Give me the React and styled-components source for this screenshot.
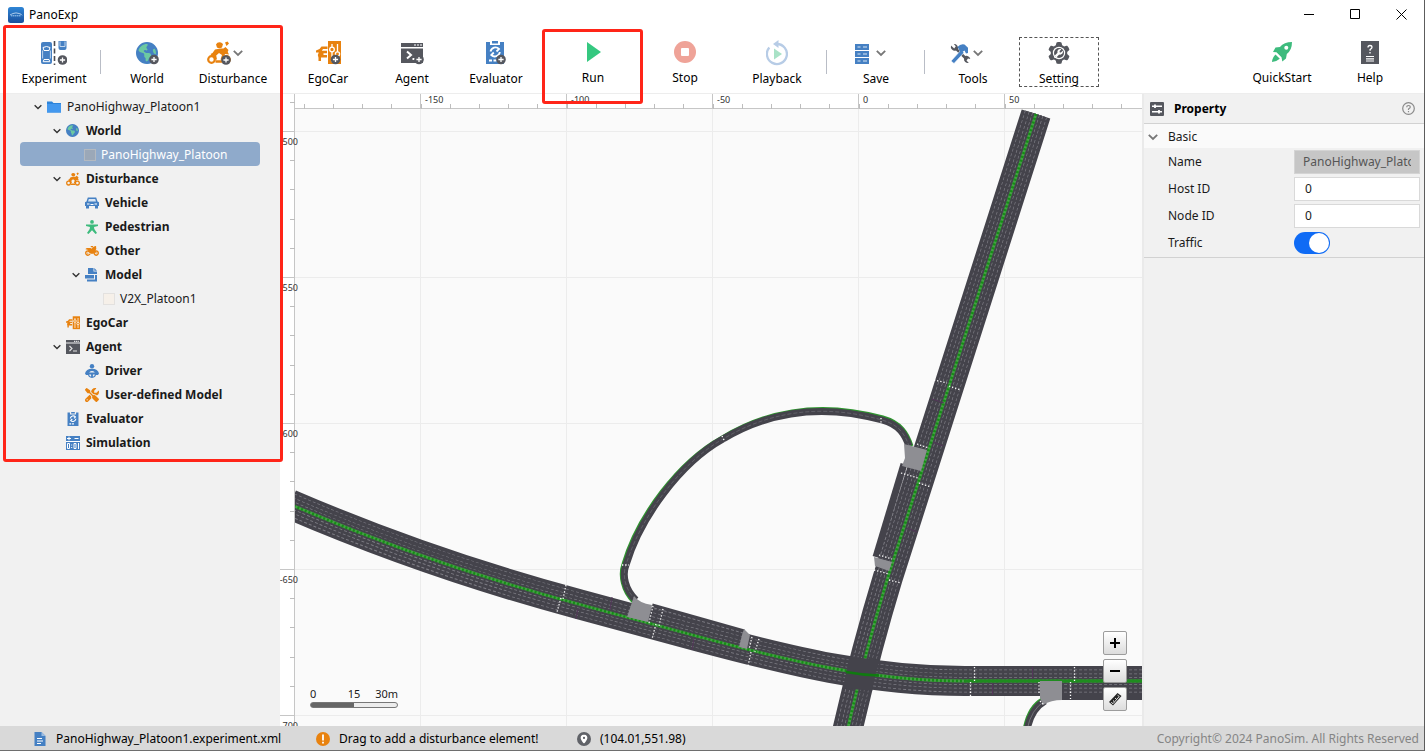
import React, { useState } from 'react';
import styled, { createGlobalStyle, css } from 'styled-components';
import {
  FaEarthAmericas,
  FaMotorcycle,
  FaScrewdriverWrench,
  FaGear,
  FaWrench,
  FaLocationDot,
} from 'react-icons/fa6';

const BLUE = '#4580c3';
const ORANGE = '#e8820f';
const GREEN = '#3dbb7d';
const SLATE = '#55575e';
const RED = '#ff2518';
const ROAD = '#44434b';
const LANE = '#7d7c84';
const PATCH = '#8e8e93';

const GlobalStyle = createGlobalStyle`
  *, *::before, *::after { box-sizing: border-box; }
  body { margin: 0; }
  body, button, input {
    font-family: "Noto Sans", "Open Sans", "Noto Sans CJK SC", sans-serif;
    font-size: 12px;
    line-height: 16px;
    color: #1a1a1a;
  }
`;

const Shell = styled.div`
  position: relative;
  display: flex;
  flex-direction: column;
  height: 100vh;
  background: #fff;
  border-right: 1px solid #5c5c5c;
  border-bottom: 1px solid #6e6e6e;
  overflow: hidden;
`;

/* ---------- title bar ---------- */

const TitleBar = styled.header`
  display: flex;
  align-items: center;
  flex: none;
  height: 28px;
  padding-top: 1px;
  padding-left: 8px;
  gap: 5px;
  color: #000;
`;

const WindowControls = styled.div`
  display: flex;
  margin-left: auto;
`;

const WindowButton = styled.button`
  display: grid;
  place-items: center;
  width: 46px;
  height: 27px;
  padding: 0;
  border: 0;
  background: none;
`;

/* ---------- toolbar ---------- */

const Toolbar = styled.nav`
  display: flex;
  align-items: center;
  flex: none;
  height: 66px;
  padding: 2px 14px 0;
  border-bottom: 1px solid #ededed;
`;

const ToolGroup = styled.div`
  display: flex;
  gap: ${(p) => p.$gap || 0}px;
  margin-left: ${(p) => (p.$end ? 'auto' : 0)};
`;

const Divider = styled.span`
  width: 1px;
  height: 24px;
  margin: 0 ${(p) => p.$space}px;
  background: #b9bdc6;
`;

const ToolButton = styled.button`
  display: flex;
  flex-direction: column;
  align-items: center;
  gap: 6px;
  width: 80px;
  height: 50px;
  padding: 3px 0 0;
  border: 1px dashed ${(p) => (p.$focused ? '#555' : 'transparent')};
  background: none;
  color: #000;
`;

const ToolIcon = styled.span`
  display: flex;
  align-items: center;
  gap: 2px;
  height: 24px;
  padding-right: ${(p) => (p.$menu ? 16 : 0)}px;
`;

/* ---------- body ---------- */

const Body = styled.main`
  display: flex;
  flex: 1;
  min-height: 0;
`;

const Sidebar = styled.aside`
  flex: none;
  width: 280px;
  padding: 0 20px;
  background: #f1f1f1;
`;

const Tree = styled.ul`
  margin: 0;
  padding: 0;
  list-style: none;
`;

const TreeRow = styled.li`
  display: flex;
  align-items: center;
  height: 24px;
  padding-top: 1px;
  padding-left: ${(p) => 12 + p.$level * 19}px;
  border-radius: 4px;
  font-weight: ${(p) => (p.$bold ? 700 : 400)};
  white-space: nowrap;
  ${(p) =>
    p.$selected &&
    css`
      background: #8faacb;
      color: #fff;
    `}
`;

const Toggle = styled.button`
  display: grid;
  place-items: center;
  width: 12px;
  height: 16px;
  margin-right: 3px;
  padding: 0;
  border: 0;
  background: none;
`;

const ToggleGap = styled.span`
  width: 15px;
`;

const TreeIcon = styled.span`
  display: flex;
  width: 14px;
  margin-right: 6px;
`;

const Swatch = styled.span`
  width: 12px;
  height: 12px;
  margin: 0 5px 0 -1px;
  border: 1px solid ${(p) => (p.$selected ? '#b3b9c0' : '#e3e1df')};
  background: ${(p) => (p.$selected ? '#9ba8b8' : '#f6f0e9')};
`;

const MapArea = styled.section`
  position: relative;
  flex: 1;
  min-width: 0;
  overflow: hidden;
`;

const MapCanvas = styled.svg`
  display: block;
  width: 100%;
  height: 100%;
`;

const RulerText = styled.text`
  font-size: 9px;
  fill: #333;
`;

const MapControls = styled.div`
  position: absolute;
  right: 15px;
  bottom: 15px;
  display: flex;
  flex-direction: column;
  gap: 4px;
`;

const MapButton = styled.button`
  display: grid;
  place-items: center;
  width: 24px;
  height: 24px;
  padding: 0;
  border: 1px solid #9c9c9c;
  border-radius: 2px;
  background: linear-gradient(#fff, #dcdcdc);
`;

const Scale = styled.div`
  position: absolute;
  left: 30px;
  bottom: 18px;
  width: 88px;
`;

const ScaleLabels = styled.div`
  display: grid;
  grid-template-columns: 1fr 1fr 1fr;
  font-size: 11px;

  span:nth-child(2) { text-align: center; }
  span:nth-child(3) { text-align: right; }
`;

const ScaleBar = styled.div`
  height: 6px;
  border: 1px solid #777;
  border-radius: 3px;
  background: linear-gradient(90deg, #666 50%, #ececec 50%);
`;

/* ---------- property panel ---------- */

const Panel = styled.aside`
  flex: none;
  width: 282px;
  border-left: 2px solid #eaeaea;
  background: #f1f1f1;
`;

const PanelHeader = styled.div`
  display: flex;
  align-items: center;
  height: 30px;
  padding: 0 9px 0 6px;
  border-bottom: 1px solid #d2d2d2;
`;

const PanelTitle = styled.h2`
  flex: 1;
  margin: 0 0 0 10px;
  font-size: 12px;
  line-height: 16px;
  color: #000;
`;

const IconButton = styled.button`
  display: flex;
  padding: 0;
  border: 0;
  background: none;
`;

const SectionHeader = styled.button`
  display: flex;
  align-items: center;
  gap: 10px;
  width: 100%;
  height: 24px;
  padding: 1px 4px 0;
  border: 0;
  background: #fafafa;
`;

const Fields = styled.div`
  padding: 0 4px 1px 24px;
  border-bottom: 1px solid #d2d2d2;
`;

const Field = styled.div`
  display: flex;
  align-items: center;
  justify-content: space-between;
  height: 27px;
`;

const FieldValue = styled.div`
  display: flex;
  width: 126px;
`;

const TextInput = styled.input`
  width: 100%;
  height: 24px;
  padding: 0 8px 0 10px;
  border: 1px solid #d9d9d9;
  background: #fff;

  &:disabled {
    padding-left: 8px;
    border-color: #d4d4d4;
    background: #c6c6c6;
    color: #555;
    -webkit-text-fill-color: #555;
  }
`;

const Switch = styled.input`
  appearance: none;
  width: 36px;
  height: 22px;
  margin: 0;
  padding: 1px;
  border-radius: 11px;
  background: #c4c4c4;

  &::before {
    content: '';
    display: block;
    width: 20px;
    height: 20px;
    border-radius: 50%;
    background: #fff;
  }

  &:checked {
    background: #0f6bf5;
  }

  &:checked::before {
    margin-left: 14px;
  }
`;

/* ---------- status bar ---------- */

const StatusBar = styled.footer`
  display: flex;
  align-items: center;
  flex: none;
  height: 24px;
  padding: 1px 5px 0 33px;
  background: #d9d9d9;
`;

const StatusItem = styled.span`
  display: flex;
  align-items: center;
  gap: 9px;
  min-width: ${(p) => p.$width}px;
  color: #000;
  white-space: nowrap;
`;

const Copyright = styled.span`
  margin-left: auto;
  color: #858585;
  white-space: nowrap;
`;

/* ---------- highlight frames ---------- */

const Highlight = styled.div`
  position: absolute;
  left: ${(p) => p.$x}px;
  top: ${(p) => p.$y}px;
  width: ${(p) => p.$w}px;
  height: ${(p) => p.$h}px;
  border: 3px solid ${RED};
  border-radius: 3px;
  pointer-events: none;
`;

/* ---------- icons ---------- */

const Svg = ({ w = 24, h = 24, box, children }) => (
  <svg width={w} height={h} viewBox={box || `0 0 ${w} ${h}`} fill="none" aria-hidden="true">
    {children}
  </svg>
);

const PlusBadge = ({ x, y }) => (
  <g>
    <circle cx={x} cy={y} r="4.8" fill={SLATE} />
    <path d={`M${x - 2.6} ${y}h5.2M${x} ${y - 2.6}v5.2`} stroke="#fff" strokeWidth="1.3" />
  </g>
);

const Chevron = ({ w = 10, color = '#777', stroke = 1.8 }) => (
  <svg width={w} height={w} viewBox="0 0 10 10" fill="none" aria-hidden="true">
    <path d="M.8 2.8 5 7l4.2-4.2" stroke={color} strokeWidth={stroke} />
  </svg>
);

const LogoIcon = () => (
  <Svg w={16} h={16}>
    <defs>
      <linearGradient id="logo" x1="0" y1="0" x2="0" y2="1">
        <stop offset="0" stopColor="#2f86d6" />
        <stop offset="1" stopColor="#1a4f9c" />
      </linearGradient>
    </defs>
    <rect width="16" height="16" rx="2.5" fill="url(#logo)" />
    <path d="M2 8q1.500-.8 3-1.500 3-1.200 6 0 2.500.5 3 1.800" stroke="#cfe3f7" strokeWidth=".8" />
    <path d="M3 8.800h10" stroke="#a9cdf0" strokeWidth="1" strokeDasharray="1.500 .5" />
  </Svg>
);

const ExperimentIcon = () => (
  <Svg w={26} h={24}>
    <rect x="0" y="1" width="11" height="22" rx="2" fill={BLUE} />
    <path d="M2 6.500q3.500-2 7 0l-1 3H3zM3 18.500h5l.8 2.200H2.200z" stroke="#fff" strokeWidth="1" />
    <path d="M1.600 9.500v8M9.400 9.500v8" stroke="#dbe7f5" strokeWidth=".8" />
    <path d="M13.500 0v24" stroke="#4b4b4f" strokeWidth="1.600" strokeDasharray="5 2.500" />
    <path d="M17.500 0h8v7q0 2-2 2h-4q-2 0-2-2z" fill={BLUE} />
    <path d="M19 .5v5h5v-5" stroke="#c3d6ec" strokeWidth="1" />
    <PlusBadge x={21.500} y={19} />
  </Svg>
);

const Globe = ({ size }) => (
  <>
    <circle cx={size / 2} cy={size / 2} r={size / 2 - 0.6} fill="#6cc9a1" />
    <FaEarthAmericas size={size} color={BLUE} />
  </>
);

const WorldIcon = () => (
  <Svg w={24} h={24}>
    <g transform="translate(1 1)"><Globe size={22} /></g>
    <PlusBadge x={19} y={18.500} />
  </Svg>
);

const RiderShape = () => (
  <>
    <circle cx="4.500" cy="18.500" r="3.300" stroke={ORANGE} strokeWidth="2.200" />
    <circle cx="19.500" cy="18.500" r="3.300" stroke={ORANGE} strokeWidth="2.200" />
    <path d="M9 3.500q1.500-3 5-2l2 1.500-1 3.500q-3 1.500-5 0z" fill={ORANGE} />
    <path d="M18 1.500l2.500-1 1.500 2-2.500 2.500zM16.500 7.500l2-1.500 3 3-1.500 3z" fill={ORANGE} />
    <path d="M13.500 7.500 8 8.500 5.500 12l-2 1 2 2.500L8 18.500h2l-.8-4L12 12l3 2-1.500 4.500 2.500 1 2-6.500 4 .5-2-4-2.500-2z" fill={ORANGE} />
    <path d="M8.500 20.500h7" stroke={ORANGE} strokeWidth="2.500" />
  </>
);

const DisturbanceIcon = () => (
  <Svg w={24} h={24}>
    <RiderShape />
    <PlusBadge x={19} y={19} />
  </Svg>
);

const EgoShape = () => (
  <>
    <path d="M0 9.500 3.500 8l2-2.500h6V8H7L5.800 9.800H11v2.400H7.500V14H11v2.500H5V20H2.500v-3.200L1.800 14l1-2.500H0z" fill={ORANGE} />
    <rect x="12" y="0" width="13" height="23" fill={ORANGE} />
    <path d="M16 3v18M21.500 3v18" stroke="#fff" strokeWidth="1.300" />
    <circle cx="16" cy="8.500" r="2.300" fill={ORANGE} stroke="#fff" strokeWidth="1.300" />
    <circle cx="21.500" cy="13" r="2.100" fill={ORANGE} stroke="#fff" strokeWidth="1.300" />
  </>
);

const EgoCarIcon = () => (
  <Svg w={25} h={24}>
    <EgoShape />
    <PlusBadge x={19.500} y={18.500} />
  </Svg>
);

const AgentShape = () => (
  <>
    <path d="M0 1h22v4H0zM0 6.500h22V21H0z" fill={SLATE} />
    <path d="M13 3h2M16 3h2M19 3h2" stroke="#fff" strokeWidth="1.200" />
    <path d="m6 9.500 4 3.500-4 3.500M11.500 17h3" stroke="#fff" strokeWidth="2" />
  </>
);

const AgentIcon = () => (
  <Svg w={23} h={24}>
    <g transform="translate(0 1)"><AgentShape /></g>
    <PlusBadge x={18} y={18.500} />
  </Svg>
);

const EvaluatorShape = () => (
  <>
    <path d="M0 1h4v3h10V1h4v22H0zM6 0h6v2.500H6z" fill={BLUE} />
    <path d="M4.500 10.500a5 5 0 0 1 8.500-2.500l-2.500 2.500M13.800 11a5 5 0 0 1-8.500 3l2.500-2.500" stroke="#fff" strokeWidth="1.800" />
    <path d="M3 19.500h3M7.500 19.500h3" stroke="#fff" strokeWidth="2" />
  </>
);

const EvaluatorIcon = () => (
  <Svg w={20} h={24}>
    <EvaluatorShape />
    <PlusBadge x={15} y={18.500} />
  </Svg>
);

const RunIcon = () => (
  <Svg w={15} h={20}><path d="M1 0l14 10L1 20z" fill="#35c880" /></Svg>
);

const StopIcon = () => (
  <Svg w={22} h={22}>
    <circle cx="11" cy="11" r="11" fill="#efa398" />
    <rect x="7" y="7" width="8" height="8" rx="1" fill="#fff" />
  </Svg>
);

const PlaybackIcon = () => (
  <Svg w={22} h={26}>
    <path d="M3.300 7.500A10 10 0 1 0 11 4" stroke="#b7cce6" strokeWidth="2.300" />
    <path d="M12.500 0v8L7 4z" fill="#b7cce6" />
    <path d="M8 8.500l8 5.500-8 5.500z" fill="#a9e2c6" />
  </Svg>
);

const SaveIcon = () => (
  <Svg w={24} h={24}>
    {[4, 11, 18].map((y) => (
      <g key={y}>
        <rect x="5" y={y - 1} width="14" height="6" fill={BLUE} />
        <path d={`M7.500 ${y + 2}h3M13 ${y + 2}h4`} stroke="#d9e6f4" strokeWidth="1.200" />
      </g>
    ))}
  </Svg>
);

const ToolsIcon = () => (
  <Svg w={24} h={24}>
    <path d="M4 4.500a4 4 0 0 0 5 5l8 8a4 4 0 0 0 4.800 4.500l-2.300-2.500 1.500-2 2.300.5a4 4 0 0 0-5-3l-7.300-7A4 4 0 0 0 6.800 3l2 2.200-1.600 2.200z" fill={SLATE} />
    <path d="m4 20 10-11 3 2.700L7 22.500z" fill={BLUE} stroke="#fff" strokeWidth=".6" />
    <path d="M10.500 6q3-3.500 7-2.500l3.500 3.200V12l-2 .5-1.500-3L14 12z" fill={BLUE} />
  </Svg>
);

const SettingIcon = () => (
  <Svg w={24} h={24}>
    <FaGear x={1} y={1} size={22} color={SLATE} />
    <circle cx="12" cy="12" r="6.200" fill="#fff" />
    <circle cx="12" cy="12" r="5" fill={SLATE} />
    <FaWrench x={7} y={8} size={9} color="#fff" />
  </Svg>
);

const RocketIcon = () => (
  <Svg w={22} h={22}>
    <path d="M21 1Q13 1 9 6L4.500 6.500 2 11l3.500.3 5 5 .8 4.200 3.700-3 .8-4.500Q21 9 21 1z" fill={GREEN} />
    <circle cx="15.300" cy="6.700" r="2" fill="#fff" />
    <path d="M4.500 13.500l4.300 4.300Q6 20.500 1 21q.5-5 3.500-7.500z" fill={GREEN} />
  </Svg>
);

const HelpIcon = () => (
  <Svg w={18} h={23}>
    <rect width="18" height="23" fill={SLATE} />
    <path d="M7 6.500q0-2 2-2t2 1.800q0 1.200-1.900 2.200v1.300M9 11v1.500" stroke="#fff" strokeWidth="1.300" />
    <path d="M5 15.500h8M5 17.800h8M5 20h8" stroke="#fff" strokeWidth="1.200" />
  </Svg>
);

const FolderIcon = () => (
  <Svg w={14} h={14}>
    <path d="M0 1.500h5L6.500 3H14v9.500H0z" fill="#2d84da" />
    <path d="M0 4h14v8.500H0z" fill="#4398ee" />
  </Svg>
);

const GlobeIcon = () => <Svg w={14} h={14}><Globe size={13} /></Svg>;
const BikerIcon = () => <Svg w={14} h={14} box="0 0 24 23"><RiderShape /></Svg>;
const MotorbikeIcon = () => (
  <Svg w={14} h={14}>
    <FaMotorcycle size={14} color={ORANGE} />
    <path d="M1.500 4h4l1.500 1 3-1.500 1.500 1L9 9.500H5L3 6.500z" fill={ORANGE} />
  </Svg>
);
const CraftIcon = () => <FaScrewdriverWrench size={14} color={ORANGE} aria-hidden="true" />;

const VehicleIcon = () => (
  <Svg w={14} h={14}>
    <path d="M2.800 1.500h8.400L12.500 5.500l1.500.8V10h-1v2.500h-3V10H4v2.500H1V10H0V6.300l1.500-.8z" fill={BLUE} />
    <path d="M3.800 3h6.400l.8 2.500H3z" fill="#d8e5f4" />
    <path d="M2 8h2.500M9.500 8H12M5.500 8.500h3" stroke="#fff" strokeWidth="1.100" />
  </Svg>
);

const PedestrianIcon = () => (
  <Svg w={14} h={14}>
    <circle cx="7" cy="1.900" r="1.900" fill={GREEN} />
    <path d="M1 4.500h12v1.600l-4 .8.300 2L12 13l-1.500 1L7 10.300 3.500 14 2 13l2.700-4.100.3-2-4-.8z" fill={GREEN} />
  </Svg>
);

const ModelIcon = () => (
  <Svg w={14} h={14}>
    <path d="M3 0h5.500v3.500H12V6H3z" fill={BLUE} />
    <path d="M9.300 0 12 2.700H9.300zM0 7h9v3.500H0zM10 7h2v6.500H2v-2h8z" fill={BLUE} />
  </Svg>
);

const SmallEgoIcon = () => <Svg w={14} h={14} box="0 0 25 24"><EgoShape /></Svg>;
const SmallAgentIcon = () => (
  <Svg w={14} h={14}>
    <path d="M0 0h14v2.500H0zM0 3.500h14V14H0z" fill={SLATE} />
    <path d="M8 1.300h5" stroke="#fff" strokeWidth="1" strokeDasharray="1.200 .6" />
    <path d="m3.500 6 2.500 2.500L3.500 11M7 11h4" stroke="#e4e4e4" strokeWidth="1.100" />
  </Svg>
);
const SmallEvaluatorIcon = () => <Svg w={14} h={14} box="-2 0 22 23"><EvaluatorShape /></Svg>;

const DriverIcon = () => (
  <Svg w={14} h={14}>
    <circle cx="7" cy="2.200" r="2.200" fill={BLUE} />
    <path d="M0 9.500Q1 4.800 7 4.800t7 4.700l-1 1.500H1z" fill={BLUE} />
    <circle cx="7" cy="9.800" r="3.500" fill="#f1f1f1" stroke={BLUE} strokeWidth="1.200" />
    <path d="M4 9.500h6M7 10v3" stroke={BLUE} strokeWidth="1.800" />
  </Svg>
);

const SimulationIcon = () => (
  <Svg w={14} h={14}>
    <rect width="14" height="14" fill={BLUE} />
    <path d="M1 2.500h4M3 .7v3.600M8.500 2.500h4M0 5.500h14" stroke="#fff" strokeWidth="1" />
    <path d="M1.500 7.500h2v5h-2zM8 7.500h2v5H8zM12.500 7v6M5.700 8.500v1M5.700 11v1" stroke="#fff" strokeWidth="1" />
  </Svg>
);

const PropertyIcon = () => (
  <Svg w={14} h={14}>
    <rect width="14" height="14" rx="1" fill={SLATE} />
    <path d="M2 4.300h10M2 9.700h10" stroke="#fff" strokeWidth="1.400" />
    <path d="M5 2.500v3.600M9 7.900v3.600" stroke="#fff" strokeWidth="1.800" />
  </Svg>
);

const QuestionIcon = () => (
  <Svg w={13} h={13}>
    <circle cx="6.500" cy="6.500" r="5.800" stroke="#8a8a8a" strokeWidth="1.200" />
    <path d="M4.700 5.300q0-1.800 1.800-1.800t1.800 1.600q0 .9-1.800 2v.8M6.500 8.900v1.300" stroke="#8a8a8a" strokeWidth="1.200" />
  </Svg>
);

const FileIcon = () => (
  <Svg w={14} h={14}>
    <path d="M1.500 0h7l4 4v10h-11z" fill={BLUE} />
    <path d="M8.500 0v4h4z" fill="#9dbde2" />
    <path d="M4 6.500h5M4 9h6M4 11.500h4" stroke="#fff" strokeWidth="1.100" />
  </Svg>
);

const WarningIcon = () => (
  <Svg w={14} h={14}>
    <circle cx="7" cy="7" r="7" fill={ORANGE} />
    <path d="M7 2.500v6M7 9.700v1.900" stroke="#fff" strokeWidth="1.800" />
  </Svg>
);

const PinIcon = () => (
  <Svg w={14} h={14}>
    <circle cx="7" cy="7" r="7" fill="#606268" />
    <FaLocationDot x={2.500} y={2.500} size={9} color="#fff" />
  </Svg>
);

const RulerIcon = () => (
  <Svg w={14} h={14}>
    <path d="M1 10 9.500 1 13.500 4 5 13.500z" fill="#222" />
    <path d="m3.200 10.300 1.800 1.400 6.200-7.200L9.500 3.200" stroke="#ddd" strokeWidth="1" />
    <path d="M5 8.500 6.200 9.600M7.200 6.200 8.400 7.200" stroke="#fff" strokeWidth="1" />
  </Svg>
);

/* ---------- map ---------- */

const MAIN_ROAD = 'M290 504.200C380 543 470 575 580 604.500L700 637C790 661 870 681 965 681H1500';
const CROSS_ROAD = 'M1036 114L888 577C870 636 858 684 847 732';
const LOOP = 'M636 600C625 590 622 575 626 565C640 518 680 463 723 439C780 405 835 407 882 420C900 425 905 435 909 446';
const LOOP_EDGE = 'M633 602C622 591 619 575 623 564C637 516 678 461 722 437C780 402 836 404 883 417C901 422 908 433 912 446';
const RAMP = 'M1045 701Q1031 709 1027 730';
const RAMP_EDGE = 'M1042 699Q1028 707 1024 730';

const STOP_LINES = [
  'M934 380l13 3M949 386l12 4',
  'M917 444l12 4',
  'M901 473l17 5M919 483l12 4',
  'M879 555l13 4M874 570l15 4M889 580l12 3',
  'M566 585l-3 14M561 598l-4 14',
  'M653 606l-4 17M663 609l-4 17M656 624l-4 15',
  'M752 637l-3 12M759 639l-4 13M751 652l-3 14',
  'M974.500 667v14M970.500 682v14M1074.500 667v14M1070.500 682v17M1039 682v12',
  'M881 418v8M722 436l3 6M622 565h7M1040 701l4 4',
];

const PATCHES = [
  'M634 596q5 7 18 9l-4 17-21-5z',
  'M744 629l6 6-3 14-8-2 3-12z',
  'M904 444l23 6-6 21-19-5 3-8z',
  'M874 557l18 5-3 9-14-5z',
  'M1040 681h22v19q-11 0-19 5l-3-7z',
];

function Road({ d }) {
  return (
    <g>
      <path d={d} stroke={ROAD} strokeWidth="30" />
      {[23, 15, 8].map((w) => (
        <React.Fragment key={w}>
          <path d={d} stroke={LANE} strokeWidth={w} strokeDasharray="3 2" />
          <path d={d} stroke={ROAD} strokeWidth={w - 1.400} />
        </React.Fragment>
      ))}
      <path d={d} stroke="#46a046" strokeWidth="2.800" />
      <path d={d} stroke="#168c16" strokeWidth="2.800" strokeDasharray="2 2" />
    </g>
  );
}

const MAJOR = 146;
const range = (n) => Array.from({ length: n }, (_, i) => i);

function RoadMap() {
  return (
    <MapCanvas role="img" aria-label="Road network">
      <g transform="translate(-280 -94)" fill="none">
        <rect x="280" y="94" width="3000" height="3000" fill="#fff" />
        <rect x="294" y="108" width="3000" height="3000" fill="#fafafa" />

        {range(12).map((i) => (
          <path key={i} d={`M${420.500 + i * MAJOR} 109V3000`} stroke="#ececec" />
        ))}
        {range(12).map((i) => (
          <path key={i} d={`M295 ${131.500 + i * MAJOR}H3000`} stroke="#ececec" />
        ))}

        <path d="M904 464L876 557" stroke={ROAD} strokeWidth="7" />
        <path d="M652 606L744 632" stroke={ROAD} strokeWidth="5" />
        <Road d={CROSS_ROAD} />
        <Road d={MAIN_ROAD} />
        <path d="M906 470L880 557" stroke={LANE} strokeWidth="1" strokeDasharray="3 2" />
        <path d="M654 608L743 633" stroke={LANE} strokeWidth="1" strokeDasharray="3 2" />
        <path d="M1062 698H1500" stroke={ROAD} strokeWidth="4" />
        <path d="M965 681H1500" stroke="#1f8c1f" strokeWidth="2.500" />
        <path d="M849 658l30 2-7 31-29-3z" fill={ROAD} />
        <path d="M846 672q16 3 33 3.500" stroke="#107a10" strokeWidth="2.500" />

        <path d={LOOP_EDGE} stroke="#2f962f" strokeWidth="3" />
        <path d={LOOP} stroke={ROAD} strokeWidth="7" />
        <path d={LOOP} stroke={LANE} strokeWidth=".5" strokeDasharray="4 2" />
        <path d={RAMP_EDGE} stroke="#2f962f" strokeWidth="3" />
        <path d={RAMP} stroke={ROAD} strokeWidth="7" />
        <path d={RAMP} stroke={LANE} strokeWidth=".8" />

        {PATCHES.map((d) => <path key={d} d={d} fill={PATCH} />)}
        {STOP_LINES.map((d) => (
          <path key={d} d={d} stroke="#fff" strokeWidth="1.300" strokeDasharray="1.300 1.900" />
        ))}
        <path
          d="M612 597l-2 13M578 608l-2 11M694 638l-2 12M932 399l12 4M933 442l10 4M907 528l10 4M1032.500 667v12M992.500 683v12"
          stroke="#533659"
        />

        <rect x="280" y="94" width="14" height="3000" fill="#fff" />
        <path d="M294.500 94V3000M294 108.500H3000" stroke="#c6c6c6" />
        {range(50).map((i) => (
          <path key={i} d={`M${Math.round(303.700 + i * 29.200)}.500 104v5`} stroke="#bdbdbd" />
        ))}
        {range(50).map((i) => (
          <path key={i} d={`M290 ${Math.round(101.800 + i * 29.200)}.500h5`} stroke="#bdbdbd" />
        ))}
        {range(5).map((i) => (
          <g key={i}>
            <path d={`M${420.500 + i * MAJOR} 94v15`} stroke="#c6c6c6" />
            <RulerText x={425 + i * MAJOR} y={103}>{-150 + i * 50}</RulerText>
          </g>
        ))}
        {range(5).map((i) => (
          <g key={i}>
            <path d={`M280 ${131.500 + i * MAJOR}h15`} stroke="#c6c6c6" />
            <RulerText x="298" y={145 + i * MAJOR} textAnchor="end">{-500 - i * 50}</RulerText>
          </g>
        ))}
      </g>
    </MapCanvas>
  );
}

/* ---------- data ---------- */

const TREE = [
  { label: 'PanoHighway_Platoon1', level: 0, icon: FolderIcon, open: true },
  { label: 'World', level: 1, icon: GlobeIcon, open: true, bold: true },
  { label: 'PanoHighway_Platoon', level: 2, selected: true },
  { label: 'Disturbance', level: 1, icon: BikerIcon, open: true, bold: true },
  { label: 'Vehicle', level: 2, icon: VehicleIcon, bold: true },
  { label: 'Pedestrian', level: 2, icon: PedestrianIcon, bold: true },
  { label: 'Other', level: 2, icon: MotorbikeIcon, bold: true },
  { label: 'Model', level: 2, icon: ModelIcon, open: true, bold: true },
  { label: 'V2X_Platoon1', level: 3 },
  { label: 'EgoCar', level: 1, icon: SmallEgoIcon, bold: true },
  { label: 'Agent', level: 1, icon: SmallAgentIcon, open: true, bold: true },
  { label: 'Driver', level: 2, icon: DriverIcon, bold: true },
  { label: 'User-defined Model', level: 2, icon: CraftIcon, bold: true },
  { label: 'Evaluator', level: 1, icon: SmallEvaluatorIcon, bold: true },
  { label: 'Simulation', level: 1, icon: SimulationIcon, bold: true },
];

function Tool({ label, icon: Icon, menu, focused }) {
  return (
    <ToolButton type="button" $focused={focused}>
      <ToolIcon $menu={menu}>
        <Icon />
        {menu && <Chevron />}
      </ToolIcon>
      {label}
    </ToolButton>
  );
}

export default function App() {
  const [hostId, setHostId] = useState('0');
  const [nodeId, setNodeId] = useState('0');
  const [traffic, setTraffic] = useState(true);

  return (
    <Shell>
      <GlobalStyle />
      <TitleBar>
        <LogoIcon />
        <span>PanoExp</span>
        <WindowControls>
          <WindowButton type="button" aria-label="Minimize">
            <Svg w={11} h={11}><path d="M0 5.500h10" stroke="#000" /></Svg>
          </WindowButton>
          <WindowButton type="button" aria-label="Maximize">
            <Svg w={11} h={11}><path d="M.5 .5h9v9h-9z" stroke="#000" /></Svg>
          </WindowButton>
          <WindowButton type="button" aria-label="Close">
            <Svg w={11} h={11}><path d="M.5 .5l10 10M10.500 .5l-10 10" stroke="#000" /></Svg>
          </WindowButton>
        </WindowControls>
      </TitleBar>

      <Toolbar>
        <Tool label="Experiment" icon={ExperimentIcon} />
        <Divider $space={6} />
        <ToolGroup $gap={6}>
          <Tool label="World" icon={WorldIcon} />
          <Tool label="Disturbance" icon={DisturbanceIcon} menu />
        </ToolGroup>
        <Divider $space={7} />
        <ToolGroup $gap={4}>
          <Tool label="EgoCar" icon={EgoCarIcon} />
          <Tool label="Agent" icon={AgentIcon} />
          <Tool label="Evaluator" icon={EvaluatorIcon} />
        </ToolGroup>
        <Divider $space={8} />
        <ToolGroup $gap={12}>
          <Tool label="Run" icon={RunIcon} />
          <Tool label="Stop" icon={StopIcon} />
          <Tool label="Playback" icon={PlaybackIcon} />
        </ToolGroup>
        <Divider $space={9} />
        <Tool label="Save" icon={SaveIcon} menu />
        <Divider $space={8} />
        <ToolGroup $gap={6}>
          <Tool label="Tools" icon={ToolsIcon} menu />
          <Tool label="Setting" icon={SettingIcon} focused />
        </ToolGroup>
        <ToolGroup $gap={8} $end>
          <Tool label="QuickStart" icon={RocketIcon} />
          <Tool label="Help" icon={HelpIcon} />
        </ToolGroup>
      </Toolbar>

      <Body>
        <Sidebar>
          <Tree>
            {TREE.map(({ label, level, icon: Icon, open, bold, selected }) => (
              <TreeRow key={label} $level={level} $bold={bold} $selected={selected}>
                {open ? (
                  <Toggle type="button" aria-label={`Collapse ${label}`} aria-expanded="true">
                    <Chevron w={8} color="#333" stroke={1.700} />
                  </Toggle>
                ) : (
                  <ToggleGap />
                )}
                {Icon ? <TreeIcon><Icon /></TreeIcon> : <Swatch $selected={selected} />}
                {label}
              </TreeRow>
            ))}
          </Tree>
        </Sidebar>

        <MapArea>
          <RoadMap />
          <Scale>
            <ScaleLabels><span>0</span><span>15</span><span>30m</span></ScaleLabels>
            <ScaleBar />
          </Scale>
          <MapControls>
            <MapButton type="button" aria-label="Zoom in">
              <Svg w={10} h={10}><path d="M0 5h10M5 0v10" stroke="#000" strokeWidth="2" /></Svg>
            </MapButton>
            <MapButton type="button" aria-label="Zoom out">
              <Svg w={10} h={10}><path d="M0 5h10" stroke="#000" strokeWidth="2" /></Svg>
            </MapButton>
            <MapButton type="button" aria-label="Measure"><RulerIcon /></MapButton>
          </MapControls>
        </MapArea>

        <Panel>
          <PanelHeader>
            <PropertyIcon />
            <PanelTitle>Property</PanelTitle>
            <IconButton type="button" aria-label="Property help"><QuestionIcon /></IconButton>
          </PanelHeader>
          <SectionHeader type="button" aria-expanded="true">
            <Chevron />
            Basic
          </SectionHeader>
          <Fields>
            <Field>
              <label htmlFor="name">Name</label>
              <FieldValue>
                <TextInput id="name" value="PanoHighway_Platoon" disabled readOnly />
              </FieldValue>
            </Field>
            <Field>
              <label htmlFor="host">Host ID</label>
              <FieldValue>
                <TextInput id="host" value={hostId} onChange={(e) => setHostId(e.target.value)} />
              </FieldValue>
            </Field>
            <Field>
              <label htmlFor="node">Node ID</label>
              <FieldValue>
                <TextInput id="node" value={nodeId} onChange={(e) => setNodeId(e.target.value)} />
              </FieldValue>
            </Field>
            <Field>
              <label htmlFor="traffic">Traffic</label>
              <FieldValue>
                <Switch
                  id="traffic"
                  type="checkbox"
                  checked={traffic}
                  onChange={(e) => setTraffic(e.target.checked)}
                />
              </FieldValue>
            </Field>
          </Fields>
        </Panel>
      </Body>

      <StatusBar>
        <StatusItem $width={283}><FileIcon />PanoHighway_Platoon1.experiment.xml</StatusItem>
        <StatusItem $width={261}><WarningIcon />Drag to add a disturbance element!</StatusItem>
        <StatusItem><PinIcon />(104.01,551.98)</StatusItem>
        <Copyright>Copyright© 2024 PanoSim. All Rights Reserved</Copyright>
      </StatusBar>

      <Highlight $x={3} $y={25} $w={280} $h={437} />
      <Highlight $x={542} $y={29} $w={101} $h={75} />
    </Shell>
  );
}
